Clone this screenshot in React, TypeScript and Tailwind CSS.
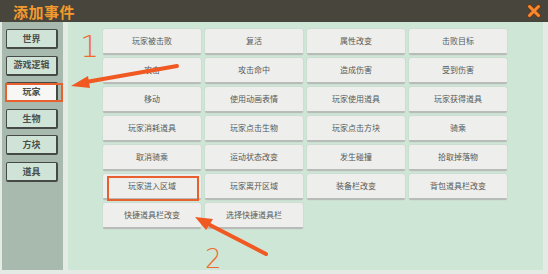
import React from 'react';

const categories = ['世界', '游戏逻辑', '玩家', '生物', '方块', '道具'];

const events = [
  '玩家被击败', '复活', '属性改变', '击败目标',
  '攻击', '攻击命中', '造成伤害', '受到伤害',
  '移动', '使用动画表情', '玩家使用道具', '玩家获得道具',
  '玩家消耗道具', '玩家点击生物', '玩家点击方块', '骑乘',
  '取消骑乘', '运动状态改变', '发生碰撞', '拾取掉落物',
  '玩家进入区域', '玩家离开区域', '装备栏改变', '背包道具栏改变',
  '快捷道具栏改变', '选择快捷道具栏',
];

const App: React.FC = () => {
  return (
    <div
      className="relative w-[548px] h-[274px] overflow-hidden bg-[#e4ebe5]"
      style={{ fontFamily: '"Noto Sans CJK SC", "Noto Sans", sans-serif' }}
    >
      {/* Header */}
      <div className="h-[22px] bg-[#47453c] flex items-center justify-between pl-[13px] pr-[7px]">
        <span className="text-[15px] font-bold leading-none text-[#f39a2c] tracking-[0.5px]">添加事件</span>
        <svg width="14" height="14" viewBox="0 0 14 14">
          <path d="M2.5 2.5 L11.5 11.5 M11.5 2.5 L2.5 11.5" stroke="#7a3410" strokeWidth="4.5" strokeLinecap="round" />
          <path d="M2.5 2.5 L11.5 11.5 M11.5 2.5 L2.5 11.5" stroke="#f58a30" strokeWidth="3" strokeLinecap="round" />
        </svg>
      </div>

      {/* Body */}
      <div className="flex h-[252px] pl-[2px] pr-[5px] pb-[4px] gap-[5px]">
        {/* Sidebar */}
        <div className="w-[61px] bg-[#a8baae] pt-[7px] pl-[4px] flex flex-col gap-[6.6px]">
          {categories.map((c) => (
            <div
              key={c}
              className={`w-[52px] h-[20px] flex items-center justify-center rounded-[2px] border border-[#464a46] border-b-[2px] border-r-[2px] text-[9px] font-bold text-[#4a504c] ${
                c === '玩家' ? 'bg-[#f7f7f5]' : 'bg-[#cfe3d7]'
              }`}
            >
              {c}
            </div>
          ))}
        </div>

        {/* Main panel */}
        <div className="flex-1 bg-[#cee6d6] pl-[35px] pt-[7px]">
          <div className="grid grid-cols-[repeat(4,98px)] auto-rows-[26px] gap-x-[4px] gap-y-[3px]">
            {events.map((e) => (
              <div
                key={e}
                className="flex items-center justify-center bg-[#eeeeed] rounded-[2px] border-b-[2px] border-b-[#b7bcb8] shadow-[0_0_0_0.5px_#c9d3cc] text-[8px] text-[#555a57]"
              >
                {e}
              </div>
            ))}
          </div>
        </div>
      </div>

      {/* Annotations */}
      <div className="absolute left-[5px] top-[83px] w-[58px] h-[19px] border-2 border-[#e8602d]" />
      <div className="absolute left-[107px] top-[176px] w-[92px] h-[25px] border-2 border-[#e8602d]" />
      <span className="absolute left-[80px] top-[32px] text-[30px] leading-none text-[#f06a30]" style={{ fontFamily: '"DejaVu Sans", sans-serif', fontWeight: 200 }}>1</span>
      <span className="absolute left-[205px] top-[246px] text-[26px] leading-none text-[#f06a30]" style={{ fontFamily: '"DejaVu Sans", sans-serif', fontWeight: 200 }}>2</span>
      <svg className="absolute left-0 top-0" width="548" height="274" viewBox="0 0 548 274">
        <line x1="177" y1="66" x2="86" y2="82" stroke="#f05a22" strokeWidth="4" strokeLinecap="round" />
        <polygon points="71,86 88,76 90,88" fill="#f05a22" />
        <line x1="266" y1="254" x2="208" y2="224" stroke="#f05a22" strokeWidth="4" strokeLinecap="round" />
        <polygon points="195,217 213,219 206,230" fill="#f05a22" />
      </svg>
    </div>
  );
};

export default App;
